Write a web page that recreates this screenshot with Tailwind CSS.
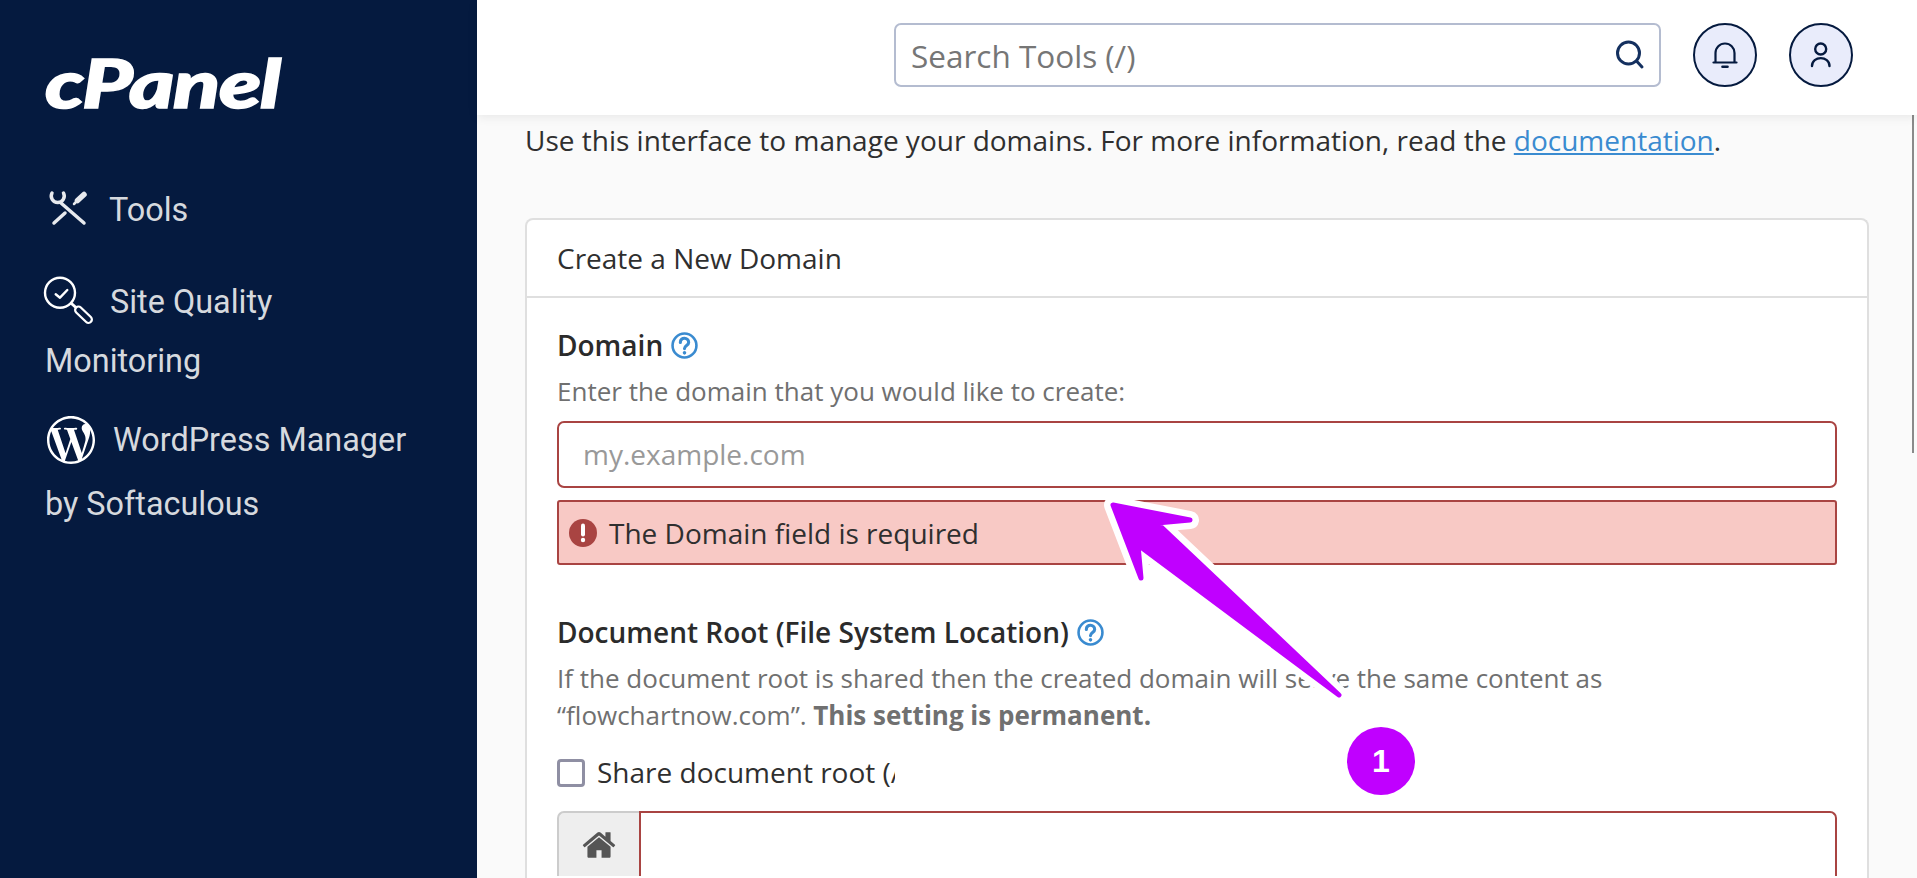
<!DOCTYPE html>
<html>
<head>
    <title>Domains - cPanel</title>
    <meta name="viewport" content="width=device-width, initial-scale=1.0">
    <script src="https://cdn.jsdelivr.net/npm/@tailwindcss/browser@4"></script>
</head>
<body class="relative h-screen overflow-hidden bg-[#fafafa] font-['Open_Sans',sans-serif]">
    <div class="flex h-full">
        <!-- Sidebar -->
        <aside class="w-[477px] shrink-0 bg-[#051a3f] pl-[45px] font-['Roboto',sans-serif] text-[32.4px] text-[#d6d9de]">
            <div class="h-[171px] pt-[45px]">
                <span class="block origin-left scale-x-[1.31] font-['Lato',sans-serif] text-[66px] leading-[76px] font-black tracking-[-1px] text-white italic [-webkit-text-stroke:1.5px_white]">cPanel</span>
            </div>
            <div class="flex h-[78px] items-center">
                <svg class="-mt-[10px] -ml-[4px] h-[50px] w-[70px] shrink-0" viewBox="0 0 70 50" fill="none" stroke="#e8eaee" stroke-linecap="round">
                    <path d="M11 13 A6.500 6.500 0 1 0 22.500 13" stroke-width="3.500" />
                    <path d="M20 23 L43 43" stroke-width="3.500" />
                    <path d="M13 43 L24 33" stroke-width="3.500" />
                    <path d="M33 24 L37 20" stroke-width="2.500" />
                    <path d="M36.500 20.500 L43 14.500" stroke-width="5.500" />
                </svg>
                <span class="-ml-[2px]">Tools</span>
            </div>
            <div class="mt-[24px] leading-[59px]">
                <div class="flex items-center">
                    <svg class="-mt-[4px] -ml-[5px] h-[60px] w-[70px] shrink-0" viewBox="0 0 70 60" fill="none" stroke="#fff" stroke-linecap="round" stroke-linejoin="round">
                        <circle cx="20" cy="21.700" r="15" stroke-width="2.400" />
                        <path d="M15.700 23.300 L20 26.700 L27.300 19" stroke-width="2.400" />
                        <path d="M32 33 L37 37.500" stroke-width="3" />
                        <path d="M38.500 39 L48.500 48.500" stroke-width="9" />
                        <path d="M38.500 39 L48.500 48.500" stroke="#051a3f" stroke-width="4.500" />
                    </svg>
                    <span>Site Quality</span>
                </div>
                <div>Monitoring</div>
            </div>
            <div class="mt-[19px]">
                <div class="flex h-[60px] items-center">
                    <svg class="ml-[2px] h-[48px] w-[48px]" viewBox="0 0 24 24" fill="#fff">
                        <path d="M21.469 6.825c.84 1.537 1.318 3.3 1.318 5.175 0 3.979-2.156 7.456-5.363 9.325l3.295-9.527c.615-1.54.82-2.771.82-3.864 0-.405-.026-.78-.07-1.11m-7.981.105c.647-.03 1.232-.105 1.232-.105.582-.075.514-.93-.067-.899 0 0-1.755.135-2.88.135-1.064 0-2.85-.15-2.85-.15-.585-.03-.661.855-.075.885 0 0 .54.061 1.125.09l1.68 4.605-2.37 7.08L5.354 6.9c.649-.03 1.234-.1 1.234-.1.585-.075.516-.93-.065-.896 0 0-1.746.138-2.874.138-.2 0-.438-.008-.69-.015C4.911 3.15 8.235 1.215 12 1.215c2.809 0 5.365 1.072 7.286 2.833-.046-.003-.091-.009-.141-.009-1.06 0-1.812.923-1.812 1.914 0 .89.513 1.643 1.06 2.531.411.72.89 1.643.89 2.977 0 .915-.354 1.994-.821 3.479l-1.075 3.585-3.9-11.61.001.014zM12 22.784c-1.059 0-2.081-.153-3.048-.437l3.237-9.406 3.315 9.087c.024.053.05.101.078.149-1.12.393-2.325.609-3.582.609M1.211 12c0-1.564.336-3.05.935-4.39L7.29 21.709C3.694 19.96 1.212 16.271 1.211 12M12 0C5.385 0 0 5.385 0 12s5.385 12 12 12 12-5.385 12-12S18.615 0 12 0" />
                    </svg>
                    <span class="ml-[18px]">WordPress Manager</span>
                </div>
                <div class="leading-[69px]">by Softaculous</div>
            </div>
        </aside>

        <main class="flex min-w-0 flex-1 flex-col">
            <!-- Top bar -->
            <header class="relative z-10 flex h-[115px] shrink-0 items-start bg-white pt-[23px] pl-[417px] shadow-[0_2px_10px_rgba(0,0,0,0.08)]">
                <div class="flex h-[64px] w-[767px] items-center rounded-[7px] border-2 border-[#b4bcd0] pr-[13px] pl-[15px]">
                    <input type="text" placeholder="Search Tools (/)" class="min-w-0 flex-1 bg-transparent pt-[2px] text-[31.5px] outline-none placeholder:text-[#767676]">
                    <svg class="h-[32px] w-[32px]" viewBox="0 0 32 32" fill="none" stroke="#14305f" stroke-width="3" stroke-linecap="round">
                        <circle cx="14.500" cy="14" r="11" />
                        <path d="M22.500 22 L28 28" />
                    </svg>
                </div>
                <div class="ml-[32px] flex h-[64px] w-[64px] items-center justify-center rounded-full border-2 border-[#051a3f] bg-[#e9ecfb]">
                    <svg class="h-[32px] w-[32px]" viewBox="0 0 32 32" fill="none" stroke="#051a3f" stroke-width="2.200" stroke-linecap="round">
                        <path d="M6.500 23 V14 A9.500 9.500 0 0 1 25.500 14 V23" />
                        <path d="M4.500 23.500 H27.500" />
                        <path d="M13.500 27.700 H18.500" stroke-width="2.600" />
                    </svg>
                </div>
                <div class="ml-[32px] flex h-[64px] w-[64px] items-center justify-center rounded-full border-2 border-[#051a3f] bg-[#e9ecfb]">
                    <svg class="h-[32px] w-[32px]" viewBox="0 0 32 32" fill="none" stroke="#051a3f" stroke-width="2.400" stroke-linecap="round">
                        <circle cx="15.700" cy="10" r="5.500" />
                        <path d="M7 27 C7 16.500 24.500 16.500 24.500 27" />
                    </svg>
                </div>
            </header>

            <!-- Page body -->
            <div class="min-h-0 flex-1 pt-[6px] pr-[48px] pl-[48px] text-[28px]">
                <p class="leading-[38px] text-[#2f2f2f]">Use this interface to manage your domains. For more information, read the <a href="#" class="text-[#3a8bd0] underline">documentation</a>.</p>

                <section class="mt-[59px] rounded-t-[8px] border-2 border-b-0 border-[#dfdfdf] bg-white pb-10">
                    <div class="flex h-[78px] items-center border-b-2 border-[#dfdfdf] px-[30px] text-[#2f2f2f]">Create a New Domain</div>
                    <div class="px-[30px] pt-[28px]">
                        <label class="flex items-center gap-[8px] leading-[38px] font-semibold text-[#2b2b2b]">
                            Domain
                            <svg class="h-[27px] w-[27px]" viewBox="0 0 26 26" fill="none" stroke="#3a8bd0" stroke-width="2.500" stroke-linecap="round">
                                <circle cx="13" cy="13" r="11.500" />
                                <path d="M9 10 C9 4.500 17 5 17 10 C17 13 13 13 13 16" stroke-width="3" />
                                <path d="M13 20 V20.100" stroke-width="3.400" />
                            </svg>
                        </label>
                        <p class="mt-[8px] text-[26px] leading-[38px] text-[#707070]">Enter the domain that you would like to create:</p>
                        <input type="text" placeholder="my.example.com" class="mt-[11px] block h-[67px] w-full rounded-[7px] border-2 border-[#a94442] bg-white px-[24px] pb-[2px] text-[28px] outline-none placeholder:text-[#999]">
                        <div class="mt-[12px] flex h-[65px] items-center rounded-[3px] border-2 border-[#a94442] bg-[#f8c9c5] pl-[10px] text-[#2f2f2f]">
                            <svg class="h-[28px] w-[28px]" viewBox="0 0 28 28">
                                <circle cx="14" cy="14" r="14" fill="#a94442" />
                                <path d="M14 6.500 V15.500" stroke="#fff" stroke-width="4" stroke-linecap="round" />
                                <circle cx="14" cy="21" r="2.200" fill="#fff" />
                            </svg>
                            <span class="ml-[12px]">The Domain field is required</span>
                        </div>

                        <label class="mt-[48px] flex items-center gap-[8px] leading-[38px] font-semibold text-[#2b2b2b]">
                            Document Root (File System Location)
                            <svg class="h-[27px] w-[27px]" viewBox="0 0 26 26" fill="none" stroke="#3a8bd0" stroke-width="2.500" stroke-linecap="round">
                                <circle cx="13" cy="13" r="11.500" />
                                <path d="M9 10 C9 4.500 17 5 17 10 C17 13 13 13 13 16" stroke-width="3" />
                                <path d="M13 20 V20.100" stroke-width="3.400" />
                            </svg>
                        </label>
                        <p class="mt-[9px] text-[26px] leading-[37px] text-[#707070]">If the document root is shared then the created domain will serve the same content as<br>“flowchartnow.com”. <strong class="font-bold">This setting is permanent.</strong></p>
                        <div class="mt-[19px] flex h-[38px] items-center text-[#2f2f2f]">
                            <span class="mt-[2px] h-[28px] w-[28px] shrink-0 rounded-[4px] border-[3px] border-[#8f8fa3] bg-white"></span>
                            <span class="ml-[12px] w-[298px] overflow-hidden whitespace-nowrap">Share document root (/</span>
                        </div>
                        <div class="mt-[20px] flex h-[65px]">
                            <span class="flex h-full w-[82px] shrink-0 items-start justify-center rounded-tl-[7px] border-2 border-r-0 border-b-0 border-[#cccccc] bg-[#eeeeee] pt-[14px]">
                                <svg class="h-[36px] w-[36px]" viewBox="0 0 1792 1792" fill="#555">
                                    <path d="M1472 992v480q0 26-19 45t-45 19h-384v-384H768v384H384q-26 0-45-19t-19-45V992q0-1 .5-3t.5-3l575-474 575 474q1 2 1 6zm223-69l-62 74q-8 9-21 11h-3q-13 0-21-7L896 424l-692 577q-12 8-24 7-13-2-21-11l-62-74q-8-10-7-23.500t11-21.500l719-599q32-26 76-26t76 26l244 204V288q0-14 9-23t23-9h192q14 0 23 9t9 23v408l219 182q10 8 11 21.500t-7 23.500z" />
                                </svg>
                            </span>
                            <input type="text" class="min-w-0 flex-1 rounded-tr-[7px] border-2 border-b-0 border-[#a94442] bg-white outline-none">
                        </div>
                    </div>
                </section>
            </div>
        </main>
    </div>

    <!-- Scrollbar thumb -->
    <div class="absolute top-[106px] right-[3px] h-[347px] w-[2px] bg-[#8a8a8a]"></div>

    <!-- Annotation drawn over the page -->
    <svg class="pointer-events-none absolute top-0 left-0 h-full w-full" viewBox="0 0 1917 878">
        <path d="M1113 505 L1190 520 L1157 523 L1339 695 L1138 545 L1141 578 Z" fill="#fff" stroke="#fff" stroke-width="18" stroke-linejoin="round" />
        <path d="M1113 505 L1190 520 L1157 523 L1339 695 L1138 545 L1141 578 Z" fill="#c000ff" stroke="#c000ff" stroke-width="5" stroke-linejoin="round" />
    </svg>
    <div class="absolute top-[727px] left-[1347px] flex h-[68px] w-[68px] items-center justify-center rounded-full bg-[#c000ff] font-['Liberation_Sans',sans-serif] text-[32px] font-bold text-white">1</div>
</body>
</html>
